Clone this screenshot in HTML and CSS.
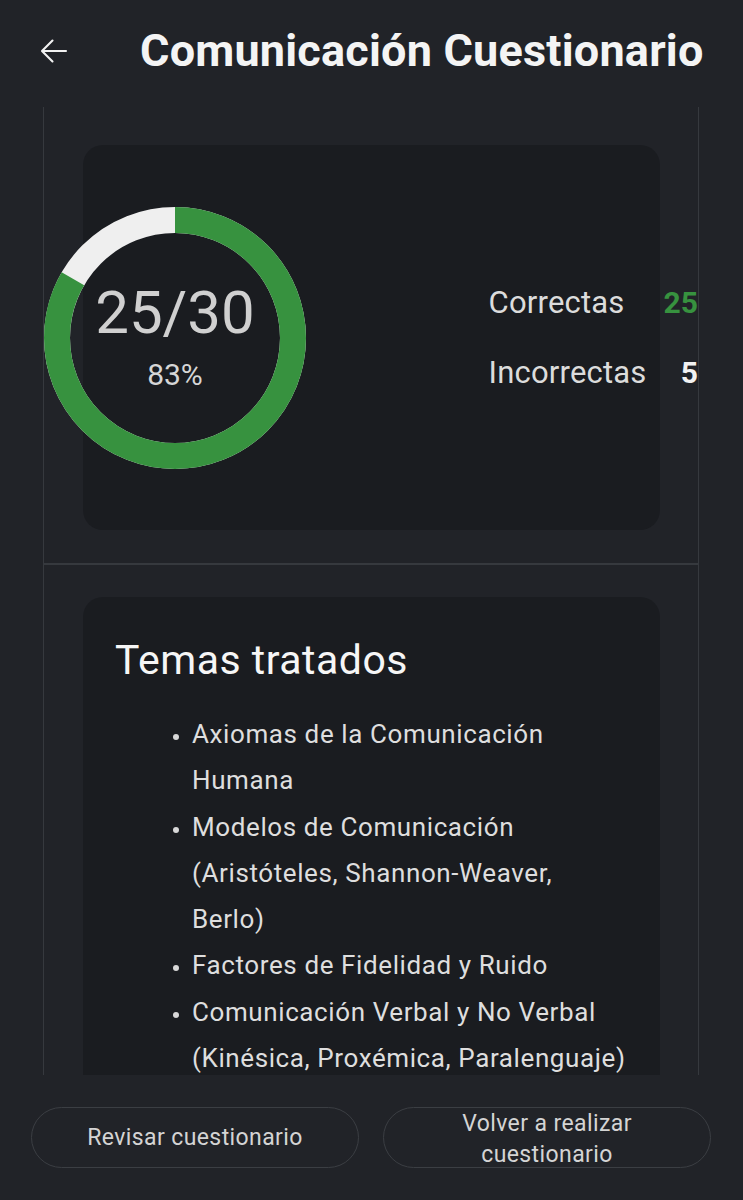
FILE: index.html
```html
<!DOCTYPE html>
<html lang="es">
<head>
  <meta charset="UTF-8">
  <meta name="viewport" content="width=device-width, initial-scale=1.0">
  <title>Comunicación Cuestionario</title>
  <link rel="stylesheet" href="styles.css">
</head>
<body>
  <header class="topBar">
    <button class="backBtn" aria-label="Volver">
      <svg width="36" height="36" viewBox="0 0 24 24"><path d="M20 12H4.5M11 5l-7 7 7 7" fill="none" stroke="#f2f2f2" stroke-width="1.4" stroke-linecap="round" stroke-linejoin="round"/></svg>
    </button>
    <h1 class="title">Comunicación Cuestionario</h1>
  </header>

  <main class="resultPane">
    <section class="summary">
      <div class="scoreCard">
        <div class="donut">
          <!-- anillo: gris de fondo + arco verde con el porcentaje -->
          <svg width="262" height="262" viewBox="0 0 262 262">
            <circle cx="131" cy="131" r="118" fill="none" stroke="#efefef" stroke-width="26"/>
            <circle cx="131" cy="131" r="118" fill="none" stroke="#37923f" stroke-width="26"
                    stroke-dasharray="617.8 741.4" transform="rotate(-90 131 131)"/>
          </svg>
          <div class="donutText">
            <div class="score">25/30</div>
            <div class="pct">83%</div>
          </div>
        </div>
        <div class="stats">
          <span class="statLabel">Correctas</span><span class="statVal ok">25</span>
          <span class="statLabel">Incorrectas</span><span class="statVal">5</span>
        </div>
      </div>
    </section>

    <section class="topics">
      <div class="topicCard">
        <h2>Temas tratados</h2>
        <ul>
          <li>Axiomas de la Comunicación Humana</li>
          <li>Modelos de Comunicación (Aristóteles, Shannon-Weaver, Berlo)</li>
          <li>Factores de Fidelidad y Ruido</li>
          <li>Comunicación Verbal y No Verbal (Kinésica, Proxémica, Paralenguaje)</li>
        </ul>
      </div>
    </section>
  </main>

  <footer class="actions">
    <button class="pillBtn">Revisar cuestionario</button>
    <button class="pillBtn">Volver a realizar<br>cuestionario</button>
  </footer>
</body>
</html>
```

FILE: styles.css
```css
html,body{margin:0;padding:0;}
body{background:#212328;color:#e6e6e6;font-family:Roboto,"Noto Sans",sans-serif;height:1200px;overflow:hidden;}

.topBar{height:107px;display:flex;align-items:center;box-sizing:border-box;padding:0 0 6px 36px;}
.backBtn{background:none;border:0;padding:0;width:36px;height:36px;display:flex;}
.title{margin:0 0 0 68px;font-size:45px;font-weight:700;color:#f4f4f4;letter-spacing:0.2px;white-space:nowrap;}

.resultPane{margin:0 44px 0 43px;height:968px;overflow:hidden;
            border-left:1px solid #36393e;border-right:1px solid #36393e;}

.summary{padding:38px 38px 33px 39px;border-bottom:2px solid #36393e;}
.scoreCard{height:385px;background:#1a1c20;border-radius:20px;display:flex;
           align-items:center;justify-content:space-between;}
.donut{position:relative;width:262px;height:262px;margin-left:-39px;}
.donut svg{display:block;}
.donutText{position:absolute;inset:0;display:flex;flex-direction:column;align-items:center;justify-content:center;}
.score{font-size:60px;line-height:64px;color:#d0d0d0;margin-top:-2px;}
.pct{font-size:30px;line-height:36px;color:#d6d6d6;margin-top:12px;}

.stats{display:grid;grid-template-columns:auto auto;column-gap:17px;row-gap:30px;
       align-items:center;margin-right:-38px;}
.statLabel{font-size:31px;line-height:40px;color:#dcdcdc;letter-spacing:0.2px;}
.statVal{font-size:30px;font-weight:700;color:#f2f2f2;justify-self:end;}
.statVal.ok{color:#37923f;}

.topics{padding:32px 38px 0 39px;}
.topicCard{background:#1a1c20;border-radius:20px;padding:38px 32px 40px 32px;}
.topicCard h2{margin:0 0 26px;font-size:41px;font-weight:400;line-height:50px;color:#f6f6f6;letter-spacing:0.5px;}
.topicCard ul{margin:0;padding-left:77px;}
.topicCard li{font-size:26px;line-height:46.3px;color:#dedede;letter-spacing:0.6px;}
.topicCard li::marker{font-size:20px;color:#d8d8d8;}

.actions{display:grid;grid-template-columns:1fr 1fr;gap:24px;padding:32px 32px 0 31px;}
.pillBtn{height:61px;border-radius:31px;background:transparent;border:1px solid #3b3e43;
         color:#d4d4d4;font-family:Roboto,sans-serif;font-size:23px;line-height:31px;letter-spacing:0.4px;padding:0 12px;}
```
